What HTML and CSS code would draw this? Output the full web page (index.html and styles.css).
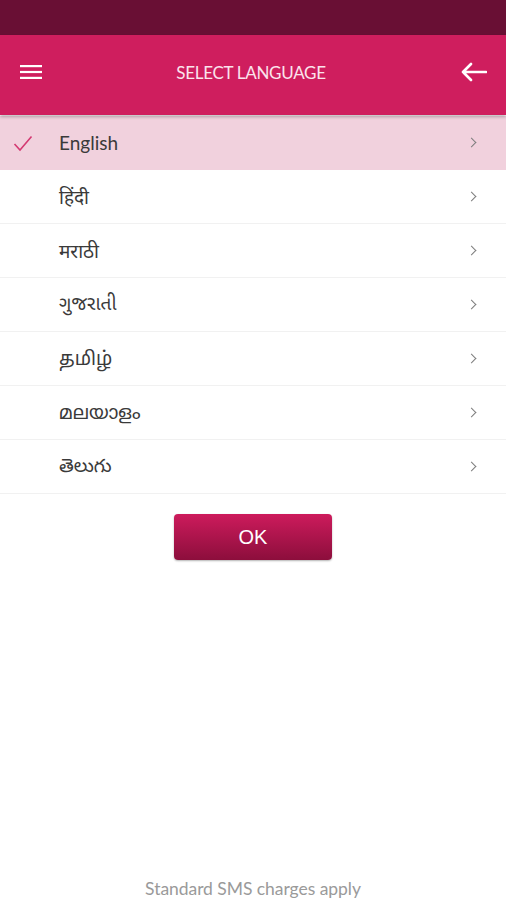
FILE: index.html
```html
<!DOCTYPE html>
<html>
<head>
<meta charset="utf-8">
<link rel="stylesheet" href="styles.css">
</head>
<body>
<div class="screen">
  <div class="status"></div>
  <header class="bar">
    <svg class="menu" width="22" height="14" viewBox="0 0 22 14"><rect x="0" y="0" width="22" height="2.2" fill="#fff"/><rect x="0" y="5.9" width="22" height="2.2" fill="#fff"/><rect x="0" y="11.8" width="22" height="2.2" fill="#fff"/></svg>
    <div class="title">SELECT LANGUAGE</div>
    <svg class="back" width="27" height="20" viewBox="0 0 27 20"><path d="M26 10H3M11 2L3 10l8 8" stroke="#fff" stroke-width="2.6" fill="none" stroke-linecap="round" stroke-linejoin="round"/></svg>
  </header>
  <ul class="list">
    <li class="row selected"><span class="check"><svg width="20" height="17" viewBox="0 0 20 17"><path d="M1.5 9l5.5 6L18.5 1.5" stroke="#d43a72" stroke-width="1.6" fill="none"/></svg></span><span class="name">English</span><span class="chev"></span></li>
    <li class="row"><span class="check"></span><span class="name">हिंदी</span><span class="chev"></span></li>
    <li class="row"><span class="check"></span><span class="name">मराठी</span><span class="chev"></span></li>
    <li class="row"><span class="check"></span><span class="name">ગુજરાતી</span><span class="chev"></span></li>
    <li class="row"><span class="check"></span><span class="name">தமிழ்</span><span class="chev"></span></li>
    <li class="row"><span class="check"></span><span class="name">മലയാളം</span><span class="chev"></span></li>
    <li class="row"><span class="check"></span><span class="name">తెలుగు</span><span class="chev"></span></li>
  </ul>
  <div class="actions"><button class="ok">OK</button></div>
  <div class="spacer"></div>
  <footer class="note">Standard SMS charges apply</footer>
</div>
</body>
</html>
```
FILE: styles.css
```css
* { box-sizing: border-box; }
html, body { margin: 0; padding: 0; }
body { background: #fff; font-family: Lato, "Noto Sans", sans-serif; }
.screen { width: 506px; height: 900px; display: flex; flex-direction: column; }
.status { height: 35px; background: #690f34; flex: none; }
.bar { height: 80px; background: #cf1e5e; display: flex; align-items: center; padding: 0 19px 6px 20px; position: relative; box-shadow: 0 2px 3px rgba(0,0,0,0.25); z-index: 1; flex: none; }
.menu { flex: none; }
.title { flex: 1; text-align: center; color: #fbe3ec; font-size: 17px; letter-spacing: -0.3px; font-weight: 400; }
.back { flex: none; }
.list { list-style: none; margin: 1px 0 0; padding: 0; }
.row { height: 54px; display: flex; align-items: center; border-bottom: 1px solid #f1f1f1; }
.row.selected { background: #f1d1dd; border-bottom-color: #f1d1dd; }
.check { width: 59px; flex: none; display: flex; padding-left: 13px; padding-top: 2px; }
.name { flex: 1; font-family: Lato, "Noto Sans", "Noto Sans Devanagari", "Noto Sans Gujarati", "Noto Sans Tamil", "Noto Sans Malayalam", "Noto Sans Telugu", sans-serif; font-size: 19px; color: #3a3a3a; }
.chev { width: 7px; height: 7px; border-top: 1.5px solid #7d7d7d; border-right: 1.5px solid #7d7d7d; transform: rotate(45deg); margin-right: 31px; flex: none; }
.actions { display: flex; justify-content: center; padding-top: 20px; }
.ok { width: 158px; height: 46px; border: none; border-radius: 4px; background: linear-gradient(#cd1b5c, #8c0e3c); color: #fff; font-family: "Liberation Sans", Arial, sans-serif; font-size: 20px; box-shadow: 0 1px 2px rgba(0,0,0,0.3); }
.spacer { flex: 1; }
.note { text-align: center; color: #9a9a9a; font-size: 17.5px; letter-spacing: -0.05px; height: 22px; line-height: 22px; }
```
